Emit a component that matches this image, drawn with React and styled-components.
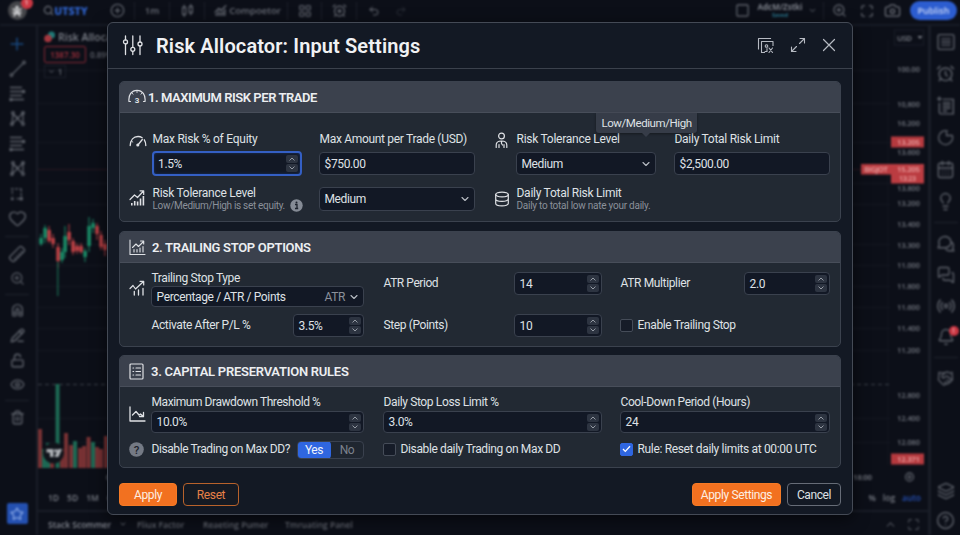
import React from 'react';
import styled, { createGlobalStyle, css } from 'styled-components';
import {
  Search, CirclePlus, ChartNoAxesCombined, LayoutGrid, AlarmClockPlus, Undo2, Redo2,
  Square, ChevronDown, ChevronUp, ZoomIn, Maximize, Camera, Plus, Heart, Ruler, Magnet, PencilLine,
  LockOpen, Eye, Trash2, Star, AlarmClock, CalendarDays, Lightbulb,
  MessageCircle, MessagesSquare, Radio, Bell, Handshake, Layers, CircleHelp,
} from 'lucide-react';

const Global = createGlobalStyle`
  *, *::before, *::after { box-sizing: border-box; }
  body { margin: 0; background: #0c0f18; font-family: Roboto, "Liberation Sans", sans-serif; overflow: hidden; }
  svg { display: block; flex: none; }
`;

const Page = styled.div`
  position: relative;
  width: 960px;
  height: 535px;
  overflow: hidden;
  background: #0c0f18;
`;

/* ---------- trading workspace behind the dialog ---------- */

const Workspace = styled.div`
  display: flex;
  flex-direction: column;
  width: 960px;
  height: 535px;
  background: #0c0f18;
  color: #6a6e77;
  font: 600 9.5px "Open Sans", "Noto Sans", sans-serif;
  filter: blur(0.8px);
`;

const TopBar = styled.header`
  display: flex;
  align-items: center;
  height: 26px;
  flex: none;
  padding-bottom: 3px;
  border-bottom: 2px solid #171b25;
`;

const TopItem = styled.div`
  display: flex;
  justify-content: center;
  align-items: center;
  width: ${(p) => p.$w}px;
  height: 22px;
  flex: none;
  color: ${(p) => p.$color || 'inherit'};
`;

const TopSep = styled.i`
  width: 1px;
  height: 18px;
  background: #1b1f2a;
  flex: none;
`;

const TopSpace = styled.div`
  ${(p) => (p.$w ? `width: ${p.$w}px; flex: none;` : 'flex: 1;')}
`;

const Avatar = styled.div`
  position: relative;
  display: flex;
  align-items: center;
  justify-content: center;
  width: 19px;
  height: 19px;
  border-radius: 50%;
  background: #45464a;
  color: #d9dadc;
`;

const Badge = styled.span`
  position: absolute;
  top: ${(p) => p.$top}px;
  right: ${(p) => p.$right}px;
  width: ${(p) => p.$size}px;
  height: ${(p) => p.$size}px;
  border-radius: 50%;
  background: #cc3743;
  color: #efb5b8;
  font: 700 7px/${(p) => p.$size}px Roboto, sans-serif;
  text-align: center;
`;

const Ticker = styled.b`
  color: #2d5fc4;
  font-size: 10.5px;
`;

const AccountName = styled.div`
  display: flex;
  flex-direction: column;
  align-items: center;
  gap: 1px;
  font: 700 8px/9px "Open Sans", sans-serif;
  color: #7d818a;

  small {
    font-size: 5.5px;
    line-height: 7px;
    color: #2a7890;
  }
`;

const Publish = styled.button`
  width: 47px;
  height: 19px;
  border: 0;
  padding: 0;
  border-radius: 10px;
  background: #2c5dd0;
  color: #cad6f5;
  font: 600 9px "Open Sans", sans-serif;
`;

const Middle = styled.div`
  display: flex;
  flex: 1;
  min-height: 0;
`;

const SideBar = styled.nav`
  display: flex;
  flex-direction: column;
  align-items: center;
  width: ${(p) => p.$w}px;
  padding-top: ${(p) => p.$top}px;
  flex: none;
  color: #5c6069;
  ${(p) => (p.$side === 'left'
    ? 'border-right: 2px solid #191d27; padding-right: 2px;'
    : 'border-left: 3px solid #191d27; padding-left: 0;')}
`;

const Slot = styled.div`
  position: relative;
  display: flex;
  align-items: center;
  justify-content: center;
  width: 24px;
  height: ${(p) => p.$h}px;
  flex: none;
  color: ${(p) => p.$color || 'inherit'};

  > svg {
    transform: rotate(${(p) => p.$turn || 0}deg);
  }
`;

const SideRule = styled.hr`
  width: 24px;
  height: 1px;
  margin: ${(p) => p.$m}px 0;
  border: 0;
  background: #1f232d;
  flex: none;
`;

const Grow = styled.div`
  flex: 1;
`;

const Favorite = styled.div`
  display: flex;
  align-items: center;
  justify-content: center;
  width: 21px;
  height: 21px;
  margin-bottom: 11px;
  border-radius: 2px;
  background: #2450b0;
  color: #8fadea;
`;

const Main = styled.main`
  position: relative;
  display: flex;
  flex-direction: column;
  flex: 1;
  min-width: 0;
`;

const Legend = styled.div`
  position: absolute;
  top: 4px;
  left: 6px;
  display: flex;
  flex-direction: column;
  gap: 3px;
`;

const LegendRow = styled.div`
  display: flex;
  align-items: center;
  gap: 2px;
  height: 14px;
  white-space: nowrap;
  font: 600 10.5px "Open Sans", sans-serif;
  color: #7d818a;
`;

const SellPrice = styled.span`
  width: 42px;
  height: 17px;
  border: 1px solid #842633;
  border-radius: 2px;
  color: #a5303c;
  font: 600 8px/15px "Open Sans", sans-serif;
  text-align: center;
`;

const LegendNote = styled.span`
  margin-left: 2px;
  font-size: 8px;
  color: #666a73;
`;

const Collapse = styled.span`
  display: flex;
  align-items: center;
  justify-content: center;
  gap: 3px;
  width: 22px;
  height: 13px;
  margin-top: 1px;
  border: 1px solid #1b1f29;
  font-size: 8px;
`;

const RangeBar = styled.div`
  display: flex;
  align-items: center;
  gap: 8px;
  height: 25px;
  flex: none;
  padding: 0 7px 0 10px;
  font: 600 8.5px "Open Sans", sans-serif;
  color: #7b7f88;

  em {
    font-style: normal;
    color: #2551b8;
  }
`;

const PanelBar = styled.div`
  display: flex;
  align-items: center;
  height: 25px;
  flex: none;
  padding: 1px 8px 0 10px;
  border-top: 2px solid #191d27;
  font: 600 8.5px "Open Sans", sans-serif;
  color: #4b4f58;
  white-space: nowrap;
`;

const PanelTab = styled.span`
  display: flex;
  align-items: center;
  gap: 8px;
  width: ${(p) => p.$w}px;
  color: ${(p) => (p.$on ? '#868a93' : '#656972')};
`;

const EndIcons = styled.div`
  display: flex;
  align-items: center;
  gap: ${(p) => p.$gap}px;
  margin-left: auto;
`;

const I = ({ as: Icon, s = 13, w = 1.8, fill = 'none' }) => <Icon size={s} strokeWidth={w} fill={fill} />;

const Glyph = ({ s = 17, sw = 1.300, children }) => (
  <svg width={s} height={s} viewBox="0 0 17 17" fill="none" stroke="currentColor" strokeWidth={sw}>{children}</svg>
);

const AvatarMark = () => (
  <Glyph s={14} sw={1.900}>
    <circle cx="8.500" cy="4" r="2" fill="currentColor" stroke="none" />
    <path d="M3 6l5.500 2L14 6M8.500 7v4M8.500 10l-4 5M8.500 10l4 5M3 10.500h11" />
  </Glyph>
);
const CandlesIcon = () => (
  <Glyph s={15}>
    <rect x="3" y="5" width="3.500" height="8" /><path d="M4.750 2v3M4.750 13v3" />
    <rect x="10.500" y="4" width="3.500" height="7" /><path d="M12.250 1v3M12.250 11v3" />
  </Glyph>
);
const PatternIcon = () => (
  <Glyph>
    <path d="M3 14L4 4l9 9M3 14L14 3l0 10M4 4l5 4" />
    <circle cx="3" cy="14" r="1.300" /><circle cx="4" cy="3" r="1.300" />
    <circle cx="14" cy="3" r="1.300" /><circle cx="14" cy="14" r="1.300" />
  </Glyph>
);
const LevelsIcon = () => (
  <Glyph>
    <path d="M1 2.500h12M1 6.500h15M1 10.500h12M1 14.500h14" />
    <circle cx="14.500" cy="6.500" r="1.200" /><circle cx="2" cy="14.500" r="1.200" />
  </Glyph>
);
const TrendIcon = () => (
  <Glyph>
    <path d="M3.500 14L14 3.500" /><circle cx="2.500" cy="15" r="1.300" /><circle cx="15" cy="2.500" r="1.300" />
  </Glyph>
);
const ForecastIcon = () => (
  <Glyph s={16}>
    <path d="M2 3h11M3.500 5v5M13 3v9" strokeDasharray="3 1.500" /><path d="M8 13.500h6" />
    <circle cx="3.500" cy="13.500" r="1" /><circle cx="13" cy="13.500" r="1.300" />
  </Glyph>
);
const WatchlistIcon = () => (
  <Glyph s={18}>
    <rect x="1" y="1.500" width="15" height="14" rx="1.500" /><path d="M4 5.500h9M4 8.500h9M4 11.500h9" />
  </Glyph>
);
const NewsIcon = () => (
  <Glyph s={19}>
    <path d="M3 6v8.500c0 .8.500 1.500 1.500 1.500h11V3H6M1 2.500h4M3 .500v4" />
    <path d="M6 6h7M6 8.500h7M6 11h7M6 13.500h4" />
  </Glyph>
);
const PieIcon = () => (
  <Glyph><path d="M11 2a7 7 0 1 0 4.300 4.500H9.500V1.500" /></Glyph>
);
const ChatIcon = () => (
  <Glyph s={19}>
    <path d="M2 12l1-2.500A5.500 5 0 1 1 8 12.300H2zM13.500 7c2 1 2.700 3.300 1.500 5.500l.8 2.500h-4c-1.500 0-2.500-.7-3.200-1.700" />
  </Glyph>
);

const TICKS = [
  [69, '100.00'], [103.500, '10,800'], [123, '16.200'], [151.500, '13.600'], [188, '13.800'], [203, '13.200'],
  [224, '13.400'], [244.500, '13.300'], [265, '11.000'], [285.500, '11.800'], [306.500, '11.600'],
  [327.500, '11.400'], [349.500, '11.200'], [395, '12.800'], [418, '12.400'], [442, '12.080'],
];
const GRID = [70, 103, 142, 183, 204, 244, 265, 286, 307, 328, 350, 418, 442];
/* x, body top, body bottom, wick top, wick bottom, rising */
const CANDLES = [
  [41, 238, 244, 234, 246, 1], [45, 228, 238, 225, 243, 1], [49, 230, 241, 226, 243, 0], [53, 238, 244, 234, 248, 0],
  [58, 247, 261, 243, 268, 0], [62, 252, 260, 248, 263, 1], [65, 236, 252, 226, 258, 1], [69, 232, 240, 224, 245, 0],
  [73, 241, 252, 238, 255, 0], [77, 246, 251, 243, 254, 0], [81, 246, 252, 243, 254, 0], [85, 251, 257, 248, 262, 1],
  [89, 226, 246, 217, 252, 1], [93, 223, 228, 219, 233, 1], [97, 226, 234, 223, 240, 0], [101, 235, 247, 231, 250, 0],
  [105, 244, 250, 240, 256, 0],
];
const VOLUME = [
  [40, 429, 0], [44, 449, 1], [48, 443, 1], [52, 447, 0], [57.500, 384, 1], [62, 449, 0], [66, 433, 0], [71, 445, 0],
  [75, 441, 1], [80, 448, 0], [84, 446, 0], [88.500, 437, 0], [93, 442, 1], [97, 447, 0], [101, 449, 0], [106, 436, 0],
];

const PriceChart = () => (
  <svg width="891" height="459" viewBox="38 26 891 459" fontFamily="Open Sans, sans-serif" fontSize="7.800" fontWeight="600">
    <g stroke="#141822">{GRID.map((y) => <path key={y} d={`M38 ${y}.500H890`} />)}</g>
    <path d="M888 40V465" stroke="#131721" />
    <path d="M38 169.500H890" stroke="#2a1820" />
    <path d="M38 384.500H890" stroke="#3b4049" strokeDasharray="4 3" />
    {CANDLES.map(([x, t, b, wt, wb, up]) => (
      <g key={x} fill={up ? '#1a8a66' : '#bb4044'}>
        <rect x={x - 1.700} y={t} width="3.600" height={b - t} />
        <rect x={x - 0.500} y={wt} width="1" height={wb - wt} />
      </g>
    ))}
    <rect x="57" y="262" width="1.500" height="34" fill="#165a47" />
    {VOLUME.map(([x, y, up]) => (
      <rect key={x} x={x - 1.900} y={y} width="3.900" height={468 - y} fill={up ? '#1d6b55' : '#7a3234'} />
    ))}
    <circle cx="53.500" cy="453" r="10.500" fill="#10131a" />
    <path d="M46.500 449h7v8h-3.500v-4.500h-3.500z" fill="#b0b3b8" />
    <path d="M58 449h4l-3.500 8h-4z" fill="#b0b3b8" /><circle cx="55.800" cy="450.700" r="1.600" fill="#b0b3b8" />
    <g fill="#6f737c" textAnchor="end">
      {TICKS.map(([y, t]) => <text key={y} x="920" y={y + 3} textLength="23">{t}</text>)}
    </g>
    <rect x="891" y="136.500" width="33" height="11" fill="#b5393e" />
    <rect x="861" y="164" width="30" height="10.500" fill="#bb3c41" />
    <rect x="891" y="164" width="33" height="19.500" fill="#bb3c41" />
    <rect x="891" y="453.500" width="33" height="11" fill="#b5393e" />
    <g fill="#eba5a5" textAnchor="end">
      <text x="920" y="145" textLength="23">13.205</text>
      <text x="888" y="172" textLength="24">BIGJOT</text>
      <text x="920" y="171.500" textLength="23">15.205</text>
      <text x="916" y="180.500" textLength="17" fontSize="7">13:23</text>
      <text x="920" y="462" textLength="23">12.371</text>
    </g>
    <rect x="894.500" y="30" width="29" height="15" fill="none" stroke="#1a1e28" />
    <g fill="#7a7e87">
      <text x="897" y="40.500" textLength="15">USD</text>
      <path d="M917.500 36l5 0-2.500 3z" />
      <text x="853" y="480" textLength="19">18:00</text>
      <text x="106" y="480">0</text>
    </g>
    <g fill="none" stroke="#5b5f68" strokeWidth="1.300"><circle cx="909.500" cy="477" r="4" /><circle cx="909.500" cy="477" r="1.300" /></g>
  </svg>
);

const Backdrop = () => (
  <Workspace>
    <TopBar>
      <TopItem $w={34}><Avatar><AvatarMark /><Badge $top={-4} $right={-6} $size={12}>1</Badge></Avatar></TopItem>
      <TopItem $w={28}><I as={Search} s={11} w={2.600} /></TopItem>
      <TopItem $w={18}><Ticker>UTSTY</Ticker></TopItem>
      <TopSpace $w={20} />
      <TopItem $w={34}><I as={CirclePlus} s={15} /></TopItem><TopSep />
      <TopItem $w={34}>1m</TopItem><TopSep />
      <TopItem $w={34}><CandlesIcon /></TopItem><TopSep />
      <TopItem $w={30}><I as={ChartNoAxesCombined} s={13} w={2.400} /></TopItem>
      <TopItem $w={40}>Compoetor</TopItem>
      <TopSpace $w={12} /><TopSep />
      <TopItem $w={33}><I as={LayoutGrid} s={14} /></TopItem><TopSep />
      <TopItem $w={34}><I as={AlarmClockPlus} s={15} /></TopItem><TopSep />
      <TopItem $w={34}><I as={Undo2} s={12} w={2} /></TopItem>
      <TopItem $w={20} $color="#2b2f38"><I as={Redo2} s={12} w={2} /></TopItem>
      <TopSpace />
      <TopItem $w={24}><I as={Square} s={15} /></TopItem>
      <TopItem $w={52}><AccountName>AdcM/Zstki<small>Saved</small></AccountName></TopItem>
      <TopItem $w={13}><I as={ChevronDown} s={9} w={2.400} /></TopItem>
      <TopSpace $w={4} />
      <TopSep />
      <TopItem $w={31}><I as={ZoomIn} s={15} /></TopItem>
      <TopItem $w={23}><I as={Maximize} s={14} w={2} /></TopItem>
      <TopItem $w={29}><I as={Camera} s={17} /></TopItem>
      <TopItem $w={53}><Publish>Publish</Publish></TopItem>
    </TopBar>
    <Middle>
      <SideBar $w={38} $top={5} $side="left">
        <Slot $h={25} $color="#194a80"><I as={Plus} s={20} w={1.800} /></Slot>
        <Slot $h={25}><TrendIcon /></Slot>
        <Slot $h={25}><LevelsIcon /></Slot>
        <Slot $h={25}><PatternIcon /></Slot>
        <Slot $h={25}><LevelsIcon /></Slot>
        <Slot $h={25}><PatternIcon /></Slot>
        <Slot $h={25}><ForecastIcon /></Slot>
        <Slot $h={25}><I as={Heart} s={19} /></Slot>
        <SideRule $m={5} />
        <Slot $h={24} $turn={90}><I as={Ruler} s={18} /></Slot>
        <Slot $h={24}><I as={ZoomIn} s={15} /></Slot>
        <SideRule $m={4} />
        <Slot $h={24} $turn={-45}><I as={Magnet} s={15} w={2.200} /></Slot>
        <Slot $h={25}><I as={PencilLine} s={15} w={2.400} /></Slot>
        <Slot $h={25}><I as={LockOpen} s={15} w={2.200} /></Slot>
        <Slot $h={22}><I as={Eye} s={15} w={2.200} /></Slot>
        <SideRule $m={5} />
        <Slot $h={23}><I as={Trash2} s={15} w={2.200} /></Slot>
        <Grow />
        <Favorite><I as={Star} s={14} w={2} /></Favorite>
      </SideBar>
      <Main>
        <PriceChart />
        <Legend>
          <LegendRow>
            <svg width="12" height="12" viewBox="0 0 12 12">
              <circle cx="7.500" cy="4" r="3.500" fill="#1f7a77" /><circle cx="4" cy="7.500" r="3.800" fill="#a5373f" />
            </svg>
            Risk Allocator
          </LegendRow>
          <LegendRow><SellPrice>1387.30</SellPrice><LegendNote>0.89%</LegendNote></LegendRow>
          <Collapse><I as={ChevronDown} s={7} w={3} />1</Collapse>
        </Legend>
        <RangeBar>
          <span>1D</span><span>5D</span><span>1M</span><span>6M</span>
          <EndIcons $gap={7}><span>%</span><span>log</span><em>auto</em></EndIcons>
        </RangeBar>
        <PanelBar>
          <PanelTab $w={89} $on>Stack Scommer <I as={ChevronDown} s={8} w={2.400} /></PanelTab>
          <PanelTab $w={66}>Fliux Factor</PanelTab>
          <PanelTab $w={82}>Reaeting Pumer</PanelTab>
          <PanelTab $w={80}>Tmruating Panel</PanelTab>
          <EndIcons $gap={10}><I as={ChevronUp} s={13} w={2} /><I as={Maximize} s={13} w={2} /></EndIcons>
        </PanelBar>
      </Main>
      <SideBar $w={32} $top={0} $side="right">
        <Slot $h={31}><WatchlistIcon /></Slot>
        <Slot $h={32}><I as={AlarmClock} s={19} /></Slot>
        <Slot $h={32}><NewsIcon /></Slot>
        <Slot $h={32}><PieIcon /></Slot>
        <Slot $h={32}><I as={CalendarDays} s={19} /></Slot>
        <Slot $h={32}><I as={Lightbulb} s={19} /></Slot>
        <SideRule $m={5} />
        <Slot $h={31}><ChatIcon /></Slot>
        <Slot $h={31}><I as={MessagesSquare} s={18} /></Slot>
        <Slot $h={31}><I as={Radio} s={20} /></Slot>
        <Slot $h={31}><I as={Bell} s={18} /><Badge $top={5} $right={-1} $size={10}>!</Badge></Slot>
        <SideRule $m={5} />
        <Slot $h={31}><I as={Handshake} s={17} /></Slot>
        <Grow />
        <Slot $h={30}><I as={Layers} s={18} /></Slot>
        <Slot $h={29}><I as={CircleHelp} s={19} /></Slot>
      </SideBar>
    </Middle>
  </Workspace>
);

/* ---------- dialog ---------- */

const Dialog = styled.section`
  position: absolute;
  top: 22px;
  left: 107px;
  display: flex;
  flex-direction: column;
  width: 746px;
  height: 493px;
  border: 1px solid #444a55;
  border-radius: 6px;
  background: #131924;
  box-shadow: 0 4px 16px rgba(0, 0, 0, 0.55);
  color: #dfe1e5;
  font-size: 12px;
  line-height: 15px;
`;

const DialogHeader = styled.header`
  display: flex;
  align-items: center;
  height: 46px;
  flex: none;
  padding: 0 16px 1px 13px;
  border-bottom: 1px solid #3b414c;
`;

const DialogTitle = styled.h1`
  margin: 0 auto 0 11px;
  padding-top: 2px;
  font-size: 20px;
  font-weight: 600;
  line-height: 24px;
  letter-spacing: 0.12px;
  color: #f0f1f3;
`;

const HeaderActions = styled.div`
  display: flex;
  align-items: center;
  gap: 16px;
  color: #b6bac2;
`;

const DialogBody = styled.div`
  display: flex;
  flex-direction: column;
  padding: 12px 11px 0;
`;

const Section = styled.section`
  display: flex;
  flex-direction: column;
  width: 722px;
  height: ${(p) => p.$h}px;
  margin-bottom: ${(p) => p.$gap}px;
  border: 1px solid #3b424e;
  border-radius: 5px;
  background: #222933;
`;

const SectionHeader = styled.header`
  display: flex;
  align-items: center;
  height: 31px;
  flex: none;
  padding-left: ${(p) => p.$left ?? 9}px;
  gap: ${(p) => p.$gap}px;
  border-bottom: 1px solid #484e5a;
  border-radius: 4px 4px 0 0;
  background: #3b414d;
`;

const SectionTitle = styled.h2`
  margin: 0;
  padding-top: 1px;
  font-size: 13px;
  line-height: 16px;
  font-weight: 600;
  letter-spacing: ${(p) => p.$ls}px;
  color: #eceef1;
`;

const Form = styled.div`
  position: relative;
  display: grid;
  padding: ${(p) => p.$top}px 0 0 8px;
  grid-template-columns: ${(p) => p.$cols};
  grid-template-rows: ${(p) => p.$rows};
  row-gap: ${(p) => p.$gap}px;
`;

const IconCell = styled.div`
  padding: ${(p) => p.$top || 0}px 0 0 1px;
  color: #dfe1e5;
`;

const Field = styled.div`
  display: flex;
  flex-direction: column;
  align-items: flex-start;
  justify-content: space-between;
  height: 100%;
`;

const InlineField = styled.div`
  display: flex;
  align-items: center;
  align-self: start;
  justify-content: space-between;
  width: ${(p) => p.$w}px;
  height: 23px;
  margin-top: ${(p) => p.$top || 0}px;
`;

const Label = styled.span`
  padding-left: 0.5px;
  line-height: ${(p) => (p.$tight ? 13 : 15)}px;
  letter-spacing: ${(p) => p.$ls ?? -0.36}px;
  white-space: nowrap;
`;

const Hint = styled.span`
  display: flex;
  align-items: center;
  gap: 5px;
  height: 11px;
  margin: 0 0 0.5px 0.5px;
  font-size: 10px;
  line-height: 11px;
  letter-spacing: ${(p) => p.$ls}px;
  color: #8a909a;
  white-space: nowrap;
`;

const Control = styled.div`
  display: flex;
  align-items: center;
  width: ${(p) => p.$w}px;
  height: ${(p) => p.$h || 23}px;
  padding: 0 2px 0 4.5px;
  border: 1px solid #3a414e;
  border-radius: 4px;
  background: #121825;
  letter-spacing: -0.36px;
  white-space: nowrap;
  ${(p) => p.$focus && css`
    height: 25px;
    margin: 0 0 -1px 0;
    border: 2px solid #345fc4;
    padding: 0 2px 0 4px;
    box-shadow: inset 0 0 3px #1b3468;
  `}
`;

const Value = styled.span`
  flex: 1;
  padding-top: 1px;
`;

const Muted = styled.span`
  margin-right: 5px;
  padding-top: 1px;
  color: #8a909a;
`;

const Stepper = styled.span`
  display: flex;
  flex-direction: column;
  gap: 1px;
  flex: none;
`;

const Step = styled.span`
  display: flex;
  align-items: center;
  justify-content: center;
  width: 12px;
  height: 8px;
  border-radius: 2px;
  background: #2d3441;
  color: #a2a7b0;
`;

const ChevronWrap = styled.span`
  margin-right: 3px;
  color: #b9bdc5;
`;

const Check = styled.span`
  display: flex;
  align-items: center;
  gap: 4px;
  align-self: center;
  white-space: nowrap;
`;

const Box = styled.i`
  display: flex;
  align-items: center;
  justify-content: center;
  width: 13px;
  height: 13px;
  border: 1px solid ${(p) => (p.$on ? '#2f66e0' : '#454c58')};
  border-radius: 2px;
  background: ${(p) => (p.$on ? '#2f66e0' : '#161c28')};
`;

const Tooltip = styled.div`
  position: absolute;
  top: 0;
  left: 476px;
  width: 101px;
  height: 20px;
  padding-top: 1px;
  border-radius: 0 0 3px 3px;
  background: #363c48;
  box-shadow: 0 1px 3px rgba(0, 0, 0, 0.4);
  font-size: 11.5px;
  line-height: 19px;
  letter-spacing: -0.42px;
  text-align: center;

  &::after {
    content: '';
    position: absolute;
    top: 20px;
    left: 46px;
    border: 4px solid transparent;
    border-top-color: #363c48;
    border-bottom: 0;
  }
`;

const Toggle = styled.div`
  display: flex;
  width: 67px;
  height: 18px;
  border: 1px solid #3a414e;
  border-radius: 4px;
  background: #1f2630;
  overflow: hidden;
`;

const ToggleOption = styled.span`
  width: ${(p) => (p.$on ? 34 : 32)}px;
  margin: ${(p) => (p.$on ? '-1px 0 -1px -1px' : '0')};
  border-radius: ${(p) => (p.$on ? '4px' : '0')};
  background: ${(p) => (p.$on ? '#2f66e0' : 'transparent')};
  color: ${(p) => (p.$on ? '#f0f3fb' : '#7c828d')};
  line-height: ${(p) => (p.$on ? 18 : 16)}px;
  letter-spacing: -0.4px;
  text-align: center;
`;

const DialogFooter = styled.footer`
  display: flex;
  gap: 6px;
  padding: 15px 11px 0 11px;
`;

const VARIANTS = {
  primary: 'border: 1px solid #f57a25; background: #f27120; color: #fdeee2;',
  outline: 'border: 1px solid #b8622b; background: #151a23; color: #e88147;',
  neutral: 'border: 1px solid #666c77; background: #131924; color: #dfe1e5;',
};

const Button = styled.button`
  width: ${(p) => p.$w}px;
  height: 23px;
  padding: 1px 0 0;
  border-radius: 4px;
  font: 400 12px/20px Roboto, sans-serif;
  letter-spacing: -0.38px;
  white-space: nowrap;
  ${(p) => VARIANTS[p.$kind]}
  ${(p) => p.$push && 'margin-left: auto;'}
`;

const Icon = ({ w, h, children, sw = 1.200 }) => (
  <svg width={w} height={h} viewBox={`0 0 ${w} ${h}`} fill="none" stroke="currentColor" strokeWidth={sw} strokeLinecap="round" strokeLinejoin="round">
    {children}
  </svg>
);

const SlidersIcon = () => (
  <Icon w={24} h={22} sw={1.300}>
    <path d="M4.500 2v4M4.500 9.800V20.500M11.800 2v11.200M11.800 17.300v3.200M19 2v6M19 12v8.500" />
    <circle cx="4.500" cy="7.900" r="2" /><circle cx="11.800" cy="15.300" r="2" /><circle cx="19" cy="10" r="2" />
  </Icon>
);
const CopyFxIcon = () => (
  <Icon w={17} h={17} sw={1.100}>
    <path d="M1.500 12V1.500h12M4.500 15V4.500h11.500v4M4.500 15.500h3" strokeLinecap="square" />
    <circle cx="9.500" cy="9" r="1.300" /><path d="M8 14.500h2v-3M12 11l3.500 4.500M15.500 11L12 15.500" />
  </Icon>
);
const ExpandIcon = () => (
  <Icon w={16} h={16} sw={1.100}>
    <path d="M10 1.500h4.500V6M14.500 1.500L9.500 6.500M6 14.500H1.500V10M1.500 14.500l5-5" />
  </Icon>
);
const CloseIcon = () => <Icon w={14} h={14} sw={1.200}><path d="M1.500 1.500l11 11M12.500 1.500l-11 11" /></Icon>;
const GaugeNumberIcon = () => (
  <svg width="18" height="16" viewBox="0 0 18 16" fill="none" stroke="currentColor" strokeWidth="1.200" strokeLinecap="round">
    <path d="M2.500 12.500H1C.2 6 3.600 1.300 9 1.300s8.800 4.700 8 11.200h-1.500" />
    <path d="M9 1.500v2M4 4l1 1.200M14 4l-1 1.200" strokeWidth="0.900" />
    <text x="9" y="14" textAnchor="middle" fontSize="8" fontWeight="700" fill="currentColor" stroke="none">3</text>
  </svg>
);
const GaugeIcon = () => (
  <Icon w={18} h={12} sw={1.300}>
    <path d="M1.200 10.500C1.500 5 4.500 1.500 9 1.500c1.600 0 3 .4 4.200 1.200M15.300 4.800c1 1.500 1.500 3.400 1.500 5.700M9.300 9.500l4-5" />
    <circle cx="8.800" cy="10" r="0.900" fill="currentColor" />
    <path d="M2.800 6.500l1 .5" strokeWidth="0.900" />
  </Icon>
);
const BarsTrendIcon = () => (
  <Icon w={16} h={18} sw={1.200}>
    <path d="M1 10.500L5.500 6l3 2.500 6-6.500M11 1.800h3.700V5.500" />
    <path d="M2.800 16.500v-2.500M5.700 16.500v-4.500M8.600 16.500v-4M11.500 16.500V9.500M14.400 16.500V7" strokeWidth="1.600" strokeLinecap="butt" />
  </Icon>
);
const StrokeTrendIcon = () => (
  <Icon w={16} h={16} sw={1.200}>
    <path d="M1 8.500l3-3L6.500 9 14.500 1.500M11 1.300h3.700V5" />
    <path d="M5.300 15v-3.500M9.500 15v-5M14 15V8.500" strokeWidth="1.300" />
  </Icon>
);
const AxisTrendIcon = () => (
  <Icon w={17} h={17} sw={1.100}>
    <path d="M1 1v14.500h15" />
    <path d="M3.500 8.500L7 5l2.500 2.500 5-5M11.500 2h3.200v3" />
    <path d="M5 13V10.500M8 13V10.500M11 13V9M14 13V7.500" />
  </Icon>
);
const AxisDropIcon = () => (
  <Icon w={17} h={16} sw={1.300}>
    <path d="M1 1v14h15" /><path d="M3.500 9L7 5.500 10 9l1.500-1 3 2.500M14.500 6.500v4h-4" />
  </Icon>
);
const PersonIcon = () => (
  <Icon w={13} h={17} sw={1.200}>
    <circle cx="6.500" cy="4" r="2.900" />
    <path d="M1.200 15.500V13c0-2.500 1.800-4 5.300-4s5.300 1.500 5.300 4v2.500M4 15.500V12.500M9 15.500V12.500M6.500 9.500v2l1 1.500" />
  </Icon>
);
const DatabaseIcon = () => (
  <Icon w={15} h={16} sw={1.200}>
    <ellipse cx="7" cy="3.500" rx="6.300" ry="2.400" />
    <path d="M.7 3.500v9c0 1.300 2.800 2.400 6.300 2.400s6.300-1.100 6.300-2.400v-9M.7 8c0 1.300 2.800 2.400 6.300 2.400S13.300 9.300 13.300 8" />
    <path d="M.7 5.800c0 1.300 2.800 2.400 6.300 2.400s6.300-1.100 6.300-2.400" strokeWidth="0" />
  </Icon>
);
const ChecklistIcon = () => (
  <Icon w={15} h={17} sw={1.200}>
    <rect x="1" y="1" width="13" height="15" rx="1" />
    <path d="M4 5h.6M4 8.500h.6M4 12h.6M7 5h4.500M7 8.500h4.500M7 12h4.500" />
  </Icon>
);
const HelpIcon = () => (
  <svg width="15" height="15" viewBox="0 0 15 15">
    <circle cx="7.500" cy="7.500" r="7.300" fill="#747a85" />
    <text x="7.500" y="11.700" textAnchor="middle" fontSize="11.500" fontWeight="500" fill="#1c222c">?</text>
  </svg>
);
const InfoIcon = () => (
  <svg width="13" height="13" viewBox="0 0 13 13">
    <circle cx="6.500" cy="6.500" r="6.200" fill="#858b95" />
    <circle cx="6.500" cy="3.500" r="1" fill="#1c222c" />
    <path d="M5 5.500h2v4M5 9.500h3.200" stroke="#1c222c" strokeWidth="1.300" fill="none" />
  </svg>
);

const Chevron = () => <ChevronWrap><Icon w={8} h={6} sw={1.100}><path d="M1 1.500l3 3 3-3" /></Icon></ChevronWrap>;

const Spinner = () => (
  <Stepper>
    <Step><Icon w={6} h={4} sw={0.900}><path d="M.8 3.200L3 1l2.200 2.200" /></Icon></Step>
    <Step><Icon w={6} h={4} sw={0.900}><path d="M.8 .8L3 3 5.200.8" /></Icon></Step>
  </Stepper>
);

const NumberInput = ({ value, w, h, focus }) => (
  <Control $w={w} $h={h} $focus={focus}><Value>{value}</Value><Spinner /></Control>
);
const TextInput = ({ value, w }) => <Control $w={w}><Value>{value}</Value></Control>;
const Select = ({ value, w, h, note }) => (
  <Control $w={w} $h={h}><Value>{value}</Value>{note && <Muted>{note}</Muted>}<Chevron /></Control>
);
const Checkbox = ({ on, ls, children }) => (
  <Check>
    <Box $on={on}>{on && <svg width="9" height="8" viewBox="0 0 9 8" fill="none" stroke="#fff" strokeWidth="1.300"><path d="M1 4l2.300 2.400L8 1.300" /></svg>}</Box>
    <Label $ls={ls}>{children}</Label>
  </Check>
);

export default function App() {
  return (
    <Page>
      <Global />
      <Backdrop />
      <Dialog>
        <DialogHeader>
          <SlidersIcon />
          <DialogTitle>Risk Allocator: Input Settings</DialogTitle>
          <HeaderActions><CopyFxIcon /><ExpandIcon /><CloseIcon /></HeaderActions>
        </DialogHeader>

        <DialogBody>
          <Section $h={141} $gap={9}>
            <SectionHeader $gap={2} $left={8}><GaugeNumberIcon /><SectionTitle $ls={-0.440}>1. MAXIMUM RISK PER TRADE</SectionTitle></SectionHeader>
            <Form $top={19} $cols="24px 167px 175px 22px 158px 156px" $rows="43px 24px" $gap={12}>
              <IconCell $top={3}><GaugeIcon /></IconCell>
              <Field><Label $ls={-0.250}>Max Risk % of Equity</Label><NumberInput value="1.5%" w={150} focus /></Field>
              <Field><Label $ls={-0.310}>Max Amount per Trade (USD)</Label><TextInput value="$750.00" w={156} /></Field>
              <IconCell><PersonIcon /></IconCell>
              <Field><Label $ls={-0.260}>Risk Tolerance Level</Label><Select value="Medium" w={140} /></Field>
              <Field><Label $ls={-0.270}>Daily Total Risk Limit</Label><TextInput value="$2,500.00" w={156} /></Field>

              <IconCell $top={2}><BarsTrendIcon /></IconCell>
              <Field>
                <Label $tight $ls={-0.260}>Risk Tolerance Level</Label>
                <Hint $ls={-0.310}>Low/Medium/High is set equity. <InfoIcon /></Hint>
              </Field>
              <Select value="Medium" w={156} h={24} />
              <IconCell $top={4}><DatabaseIcon /></IconCell>
              <Field>
                <Label $tight $ls={-0.260}>Daily Total Risk Limit</Label>
                <Hint $ls={-0.250}>Daily to total low nate your daily.</Hint>
              </Field>
              <Tooltip>Low/Medium/High</Tooltip>
            </Form>
          </Section>

          <Section $h={116} $gap={8}>
            <SectionHeader $gap={6}><AxisTrendIcon /><SectionTitle $ls={-0.310}>2. TRAILING STOP OPTIONS</SectionTitle></SectionHeader>
            <Form $top={8} $cols="23px 232px 237px 210px" $rows="36px 23px" $gap={7}>
              <IconCell $top={9}><StrokeTrendIcon /></IconCell>
              <Field><Label>Trailing Stop Type</Label><Select value="Percentage / ATR / Points" note="ATR" w={213} h={21} /></Field>
              <InlineField $w={219} $top={1}><Label $ls={-0.440}>ATR Period</Label><NumberInput value="14" w={88} /></InlineField>
              <InlineField $w={210} $top={1}><Label>ATR Multiplier</Label><NumberInput value="2.0" w={86} /></InlineField>
              <IconCell />
              <InlineField $w={213}><Label $ls={-0.380}>Activate After P/L %</Label><NumberInput value="3.5%" w={71} /></InlineField>
              <InlineField $w={219}><Label $ls={-0.390}>Step (Points)</Label><NumberInput value="10" w={88} /></InlineField>
              <Checkbox>Enable Trailing Stop</Checkbox>
            </Form>
          </Section>

          <Section $h={113} $gap={0}>
            <SectionHeader $gap={7}><ChecklistIcon /><SectionTitle $ls={-0.260}>3. CAPITAL PRESERVATION RULES</SectionTitle></SectionHeader>
            <Form $top={8} $cols="23px 232px 237px 210px" $rows="38px 18px" $gap={7}>
              <IconCell $top={11}><AxisDropIcon /></IconCell>
              <Field><Label $ls={-0.430}>Maximum Drawdown Threshold %</Label><NumberInput value="10.0%" w={213} h={22} /></Field>
              <Field><Label $ls={-0.370}>Daily Stop Loss Limit %</Label><NumberInput value="3.0%" w={219} h={22} /></Field>
              <Field><Label $ls={-0.400}>Cool-Down Period (Hours)</Label><NumberInput value="24" w={210} h={22} /></Field>
              <IconCell $top={2}><HelpIcon /></IconCell>
              <InlineField $w={213} $top={-2}>
                <Label $ls={-0.410}>Disable Trading on Max DD?</Label>
                <Toggle><ToggleOption $on>Yes</ToggleOption><ToggleOption>No</ToggleOption></Toggle>
              </InlineField>
              <Checkbox ls={-0.370}>Disable daily Trading on Max DD</Checkbox>
              <Checkbox on ls={-0.340}>Rule: Reset daily limits at 00:00 UTC</Checkbox>
            </Form>
          </Section>
        </DialogBody>

        <DialogFooter>
          <Button $kind="primary" $w={58}>Apply</Button>
          <Button $kind="outline" $w={56}>Reset</Button>
          <Button $kind="primary" $w={89} $push>Apply Settings</Button>
          <Button $kind="neutral" $w={54}>Cancel</Button>
        </DialogFooter>
      </Dialog>
    </Page>
  );
}
